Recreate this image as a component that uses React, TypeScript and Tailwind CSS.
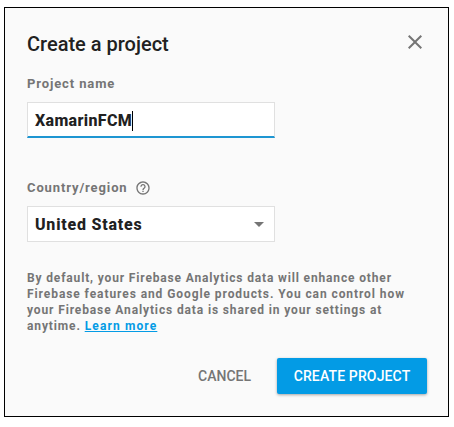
import { ReactNode } from "react";

type FieldLabelProps = {
  children: ReactNode;
};

function FieldLabel({ children }: FieldLabelProps) {
  return (
    <div className="flex h-4 items-center gap-[7px] text-[13px] font-bold leading-4 tracking-[0.88px] text-[#757575]">
      {children}
    </div>
  );
}

function CloseIcon() {
  return (
    <svg viewBox="0 0 24 24" className="size-6 fill-[#757575]">
      <path d="M19 6.41 17.59 5 12 10.59 6.41 5 5 6.41 10.59 12 5 17.59 6.41 19 12 13.41 17.59 19 19 17.59 13.41 12z" />
    </svg>
  );
}

function HelpIcon() {
  return (
    <svg viewBox="0 0 24 24" className="size-4 fill-[#757575]">
      <path d="M11 18h2v-2h-2v2zm1-16C6.48 2 2 6.48 2 12s4.48 10 10 10 10-4.48 10-10S17.52 2 12 2zm0 18c-4.41 0-8-3.59-8-8s3.59-8 8-8 8 3.59 8 8-3.59 8-8 8zm0-14c-2.21 0-4 1.79-4 4h2c0-1.1.9-2 2-2s2 .9 2 2c0 2-3 1.75-3 5h2c0-2.25 3-2.5 3-5 0-2.21-1.79-4-4-4z" />
    </svg>
  );
}

export default function App() {
  return (
    <div className="h-[427px] w-[454px] bg-white pl-1 pt-[7px] font-['Roboto',sans-serif]">
      <div className="flex h-[410px] w-[445px] flex-col border border-black bg-[#fafafa] pl-[22px] pr-[21px]">
        <div className="mt-[22px] flex h-6 items-center justify-between">
          <h1 className="pt-1 text-[20px] font-medium leading-6 text-[#212121]">Create a project</h1>
          <button type="button" aria-label="Close">
            <CloseIcon />
          </button>
        </div>

        <div className="mt-[22px]">
          <FieldLabel>Project name</FieldLabel>
        </div>
        <div className="mt-[10px] flex h-9 w-[248px] items-center border border-b-2 border-[#e0e0e0] border-b-[#1e96d2] bg-white pl-[7px] pt-0.5 text-[16px] font-extrabold tracking-[0.36px] text-[#212121]">
          XamarinFCM
          <span className="h-5 w-px bg-black" />
        </div>

        <div className="mt-[42px]">
          <FieldLabel>
            Country/region
            <HelpIcon />
          </FieldLabel>
        </div>
        <div className="mt-[10px] flex h-9 w-[248px] items-center justify-between border border-[#e0e0e0] bg-white pl-[7px] pr-[10px] pt-px text-[16px] font-extrabold tracking-[0.78px] text-[#212121]">
          United States
          <svg viewBox="0 0 10 5" className="h-[5px] w-[10px] fill-[#757575]">
            <path d="M0 0h10L5 5z" />
          </svg>
        </div>

        <p className="mt-7 whitespace-nowrap text-[12px] font-bold leading-4 tracking-[0.88px] text-[#757575]">
          <span className="tracking-[0.85px]">By default, your Firebase Analytics data will enhance other</span>
          <br />
          <span className="tracking-[0.92px]">Firebase features and Google products. You can control how</span>
          <br />
          <span className="tracking-[0.87px]">your Firebase Analytics data is shared in your settings at</span>
          <br />
          anytime. <a className="tracking-[1.12px] text-[#039be5] underline">Learn more</a>
        </p>

        <div className="mt-6 flex h-9 justify-end gap-[10px] text-[14px] font-medium">
          <button type="button" className="px-4 text-[#757575]">
            CANCEL
          </button>
          <button
            type="button"
            className="w-[150px] rounded-[2px] bg-[#039be5] tracking-[0.14px] text-white shadow-[0_1px_3px_rgba(0,0,0,0.35)]"
          >
            CREATE PROJECT
          </button>
        </div>
      </div>
    </div>
  );
}
